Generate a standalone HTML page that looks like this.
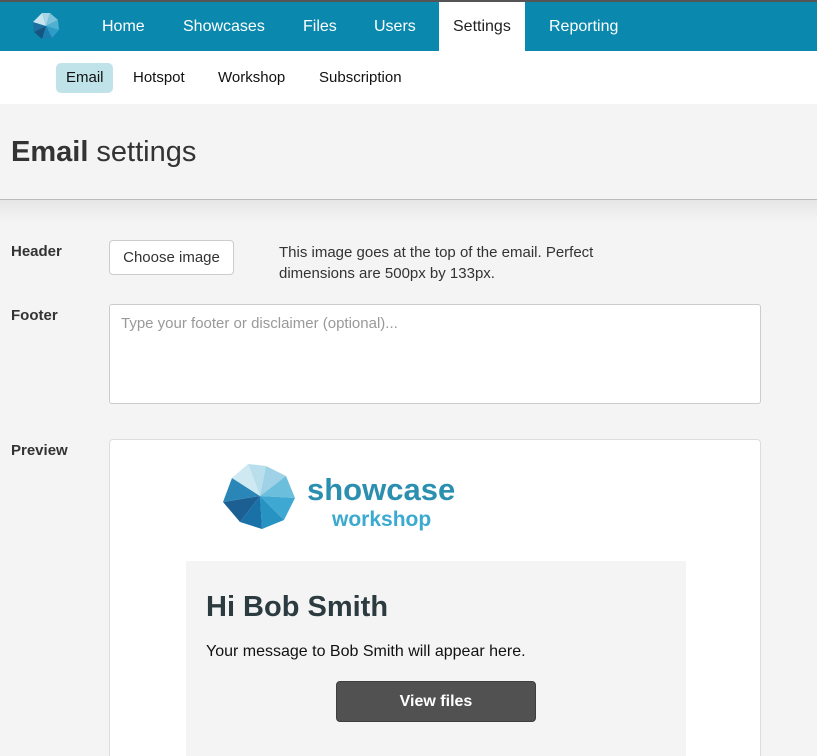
<!DOCTYPE html>
<html><head><style>
*{margin:0;padding:0;box-sizing:border-box}
html,body{height:756px;overflow:hidden}
body{width:817px;background:#f4f4f4;font-family:"Liberation Sans",sans-serif;position:relative;color:#333}
.top{position:absolute;left:0;top:0;width:817px;height:2px;background:#555}
.nav{position:absolute;left:0;top:2px;width:817px;height:49px;background:#0a88ad}
.nav a{position:absolute;top:16px;color:#fff;font-size:16px;text-decoration:none}
.nav .act{position:absolute;left:439px;top:0;width:86px;height:49px;background:#fff}
.sub{position:absolute;left:0;top:51px;width:817px;height:53px;background:#fff}
.sub span{position:absolute;top:18px;font-size:15px;color:#111}
.pill{position:absolute;left:56px;top:12px;width:57px;height:30px;background:#c0e3ea;border-radius:5px}
.hdr{position:absolute;left:0;top:104px;width:817px;height:96px;border-bottom:1px solid #bbb}
.shadow{position:absolute;left:0;top:200px;width:817px;height:22px;background:linear-gradient(#e6e6e6,#f4f4f4)}
h1{position:absolute;left:11px;top:136px;font-size:29px;font-weight:normal;color:#333}
.lbl{position:absolute;left:11px;font-size:15px;font-weight:bold;color:#333}
.btn{position:absolute;left:109px;top:240px;width:125px;height:35px;border:1px solid #ccc;border-radius:4px;background:#fff;font-size:15px;text-align:center;line-height:33px}
.help{position:absolute;left:279px;top:242px;font-size:15px;line-height:21px;color:#333}
.ta{position:absolute;left:109px;top:304px;width:652px;height:100px;border:1px solid #ccc;border-radius:3px;background:#fff;padding:10px 11px;font-size:15px;color:#999}
.prev{position:absolute;left:109px;top:439px;width:652px;height:317px;border:1px solid #ddd;border-bottom:none;border-radius:4px 4px 0 0;background:#fff}
.inner{position:absolute;left:186px;top:561px;width:500px;height:195px;background:#f4f4f4}
.hi{position:absolute;left:206px;top:591px;font-size:29px;font-weight:bold;color:#2b3b40}
.msg{position:absolute;left:206px;top:643px;font-size:16px;color:#111}
.vf{position:absolute;left:336px;top:681px;width:200px;height:41px;background:#515151;border:1px solid #3e3e3e;border-radius:4px;color:#fff;font-weight:bold;font-size:16px;text-align:center;line-height:40px}
.sc{position:absolute;left:307px;top:472px;font-size:31px;font-weight:bold;color:#2b8fb0}
.ws{position:absolute;left:332px;top:508px;font-size:21px;font-weight:bold;color:#3aaad0}
</style></head><body>
<div class="top"></div>
<div class="nav">
<svg style="position:absolute;left:31px;top:9px" width="30" height="30" viewBox="-15 -15 30 30">
<path d="M0 0 L-4 -13 L4 -13 Z" fill="#a8d6e6"/>
<path d="M0 0 L4 -13 L12 -6 Z" fill="#7cc3dc"/>
<path d="M0 0 L12 -6 L13 4 Z" fill="#4fb0d2"/>
<path d="M0 0 L13 4 L6 12 Z" fill="#2e9cc6"/>
<path d="M0 0 L6 12 L-4 13 Z" fill="#1a7fb0"/>
<path d="M0 0 L-4 13 L-12 6 Z" fill="#15557f"/>
<path d="M0 0 L-12 6 L-13 -4 Z" fill="#1e6f9e"/>
<path d="M0 0 L-13 -4 L-4 -13 Z" fill="#c8e6f0"/>
</svg>
<div class="act"></div>
<a style="left:102px">Home</a>
<a style="left:183px">Showcases</a>
<a style="left:303px">Files</a>
<a style="left:374px">Users</a>
<a style="left:453px;color:#222">Settings</a>
<a style="left:549px">Reporting</a>
</div>
<div class="sub">
<div class="pill"></div>
<span style="left:66px">Email</span>
<span style="left:133px">Hotspot</span>
<span style="left:218px">Workshop</span>
<span style="left:319px">Subscription</span>
</div>
<div class="hdr"></div>
<div class="shadow"></div>
<h1><b>Email</b> settings</h1>
<div class="lbl" style="top:243px">Header</div>
<div class="btn">Choose image</div>
<div class="help">This image goes at the top of the email. Perfect<br>dimensions are 500px by 133px.</div>
<div class="lbl" style="top:307px">Footer</div>
<div class="ta">Type your footer or disclaimer (optional)...</div>
<div class="lbl" style="top:442px">Preview</div>
<div class="prev"></div>
<svg style="position:absolute;left:220px;top:461px" width="80" height="70" viewBox="-40 -35 80 70">
<path d="M0 0 L-12 -32 L6 -30 Z" fill="#b9dfec"/>
<path d="M0 0 L6 -30 L26 -20 Z" fill="#9fd2e6"/>
<path d="M0 0 L26 -20 L35 2 Z" fill="#6cbedd"/>
<path d="M0 0 L35 2 L24 24 Z" fill="#3fa8d2"/>
<path d="M0 0 L24 24 L2 33 Z" fill="#2793c3"/>
<path d="M0 0 L2 33 L-20 26 Z" fill="#1a71a8"/>
<path d="M0 0 L-20 26 L-37 6 Z" fill="#1b5f93"/>
<path d="M0 0 L-37 6 L-28 -18 Z" fill="#2a86b6"/>
<path d="M0 0 L-28 -18 L-12 -32 Z" fill="#cfe9f3"/>
</svg>
<div class="sc">showcase</div>
<div class="ws">workshop</div>
<div class="inner"></div>
<div class="hi">Hi Bob Smith</div>
<div class="msg">Your message to Bob Smith will appear here.</div>
<div class="vf">View files</div>
</body></html>
